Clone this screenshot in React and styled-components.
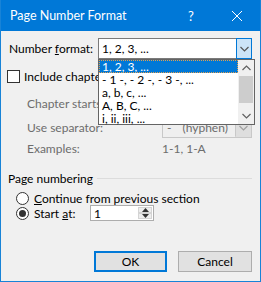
import React from "react";
import styled, { createGlobalStyle } from "styled-components";

const GlobalStyle = createGlobalStyle`
  html, body {
    margin: 0;
    padding: 0;
    background: #ffffff;
  }
  * {
    box-sizing: border-box;
  }
`;

const FONT = `Lato, "Noto Sans", sans-serif`;

const Window = styled.div`
  width: 261px;
  height: 282px;
  display: flex;
  flex-direction: column;
  background: #f0f0f0;
  border: 1px solid #1883d7;
  border-top: none;
  font-family: ${FONT};
  font-size: 12px;
  color: #000;
  overflow: hidden;
`;

const TitleBar = styled.div`
  height: 31px;
  flex-shrink: 0;
  display: flex;
  align-items: center;
  background: #0078d7;
  color: #fff;
  padding-left: 9px;
`;

const Title = styled.div`
  flex: 1;
  font-size: 12.5px;
`;

const TitleButton = styled.div`
  width: 46px;
  height: 31px;
  display: flex;
  align-items: center;
  justify-content: center;
  font-size: 13px;
`;

const Body = styled.div`
  flex: 1;
  display: flex;
  flex-direction: column;
  padding: 7px 8px 9px 7px;
`;

const FieldRow = styled.div`
  position: relative;
  display: grid;
  grid-template-columns: ${(p) => p.$label}px 1fr;
  align-items: center;
  height: 21px;
  margin-top: ${(p) => p.$top || 0}px;
  padding-left: ${(p) => p.$indent || 1}px;
  color: ${(p) => (p.$disabled ? "#6d6d6d" : "#000")};
`;

const Label = styled.span`
  white-space: nowrap;
`;

const Combo = styled.div`
  position: relative;
  height: 21px;
  display: flex;
  align-items: stretch;
  background: ${(p) => (p.$disabled ? "#efefef" : "#fff")};
  border: 1px solid ${(p) => (p.$disabled ? "#c8c8c8" : "#7a7a7a")};
`;

const ComboText = styled.div`
  flex: 1;
  display: flex;
  align-items: center;
  gap: 11px;
  padding-left: ${(p) => (p.$disabled ? 4 : 3)}px;
  white-space: nowrap;
  color: ${(p) => (p.$disabled ? "#6d6d6d" : "#000")};
`;

const ComboButton = styled.div`
  width: 16px;
  display: flex;
  align-items: center;
  justify-content: center;
  margin: ${(p) => (p.$open ? "-1px -1px -1px 0" : "0")};
  background: ${(p) => (p.$open ? "#cce4f7" : p.$disabled ? "#dedede" : "#fff")};
  border: 1px solid ${(p) => (p.$open ? "#0078d7" : "transparent")};
  border-left: ${(p) => (p.$disabled ? "1px solid #c8c8c8" : undefined)};
`;

const DropList = styled.div`
  position: absolute;
  top: 20px;
  left: -1px;
  width: 157px;
  height: 66px;
  display: flex;
  background: #fff;
  border: 1px solid #646464;
  z-index: 5;
`;

const Items = styled.div`
  flex: 1;
  display: flex;
  flex-direction: column;
`;

const Item = styled.div`
  height: 13px;
  line-height: 11px;
  padding-left: 2px;
  white-space: nowrap;
  color: ${(p) => (p.$selected ? "#fff" : "#000")};
  background: ${(p) => (p.$selected ? "#0078d7" : "transparent")};
  border: 1px dotted ${(p) => (p.$selected ? "#e0a050" : "transparent")};
`;

const ScrollBar = styled.div`
  width: 16px;
  display: flex;
  flex-direction: column;
  background: #f0f0f0;
`;

const ScrollArrow = styled.div`
  height: 16px;
  display: flex;
  align-items: center;
  justify-content: center;
`;

const ScrollTrack = styled.div`
  flex: 1;
  display: flex;
  flex-direction: column;
  padding: 0 1px;
`;

const ScrollThumb = styled.div`
  height: 27px;
  background: #cdcdcd;
`;

const CheckRow = styled.label`
  display: flex;
  align-items: center;
  gap: 4px;
  height: 13px;
  margin-top: 11px;
  margin-left: -1px;
  white-space: nowrap;
`;

const CheckBox = styled.span`
  width: 13px;
  height: 13px;
  flex-shrink: 0;
  background: #fff;
  border: 1px solid #333;
`;

const TextRow = styled.div`
  display: grid;
  grid-template-columns: 135px 1fr;
  align-items: center;
  height: 15px;
  margin-top: ${(p) => p.$top || 0}px;
  padding-left: 19px;
  color: #6d6d6d;
`;

const GroupHeader = styled.div`
  display: grid;
  grid-template-columns: 89px 1fr;
  align-items: center;
  height: 15px;
  margin-top: 15px;
`;

const GroupLine = styled.div`
  height: 1px;
  background: #dcdcdc;
`;

const RadioRow = styled.div`
  display: flex;
  align-items: center;
  gap: 5px;
  height: ${(p) => p.$height}px;
  margin-top: ${(p) => p.$top || 0}px;
  padding-left: 8px;
  white-space: nowrap;
`;

const RadioLabel = styled.span`
  width: ${(p) => (p.$width ? `${p.$width}px` : "auto")};
`;

const Radio = styled.span`
  width: 13px;
  height: 13px;
  flex-shrink: 0;
  border-radius: 50%;
  background: #fff;
  border: 1px solid #333;
  display: flex;
  align-items: center;
  justify-content: center;

  &::after {
    content: "";
    width: 7px;
    height: 7px;
    border-radius: 50%;
    background: ${(p) => (p.$checked ? "#333" : "transparent")};
  }
`;

const SpinBox = styled.div`
  width: 64px;
  height: 16px;
  display: flex;
  background: #fff;
  border: 1px solid #adadad;
`;

const SpinText = styled.div`
  flex: 1;
  display: flex;
  align-items: center;
  padding-left: 3px;
`;

const SpinButtons = styled.div`
  width: 16px;
  display: flex;
  flex-direction: column;
  padding: 1px;
`;

const SpinHalf = styled.div`
  flex: 1;
  display: flex;
  align-items: center;
  justify-content: center;
  background: #ededed;
  border: 1px solid #d4d4d4;
`;

const Buttons = styled.div`
  margin-top: auto;
  display: flex;
  justify-content: flex-end;
  gap: 11px;
`;

const Button = styled.button`
  width: ${(p) => p.$width}px;
  height: 21px;
  padding: 0;
  font-family: ${FONT};
  font-size: 12px;
  color: #000;
  background: #e1e1e1;
  border: ${(p) => (p.$default ? "2px solid #0078d7" : "1px solid #adadad")};
`;

const Chevron = ({ dir = "down", color = "#333" }) => (
  <svg width="9" height="6" viewBox="0 0 9 6">
    <path
      d={dir === "down" ? "M0.5 1 L4.5 5 L8.5 1" : "M0.5 5 L4.5 1 L8.5 5"}
      fill="none"
      stroke={color}
      strokeWidth="1.2"
    />
  </svg>
);

const Triangle = ({ dir }) => (
  <svg width="7" height="4" viewBox="0 0 7 4">
    <path d={dir === "up" ? "M0 4 L3.5 0 L7 4 Z" : "M0 0 L3.5 4 L7 0 Z"} fill="#333" />
  </svg>
);

const CloseIcon = () => (
  <svg width="10" height="10" viewBox="0 0 10 10">
    <path d="M0 0 L10 10 M10 0 L0 10" stroke="#fff" strokeWidth="1" />
  </svg>
);

const formats = [
  "1, 2, 3, ...",
  "- 1 -, - 2 -, - 3 -, ...",
  "a, b, c, ...",
  "A, B, C, ...",
  "i, ii, iii, ...",
];

export default function App() {
  return (
    <>
      <GlobalStyle />
      <Window>
        <TitleBar>
          <Title>Page Number Format</Title>
          <TitleButton>?</TitleButton>
          <TitleButton>
            <CloseIcon />
          </TitleButton>
        </TitleBar>
        <Body>
          <FieldRow $label={89} $top={0}>
            <Label>
              Number <u>f</u>ormat:
            </Label>
            <Combo>
              <ComboText>1, 2, 3, ...</ComboText>
              <ComboButton $open>
                <Chevron color="#555" />
              </ComboButton>
              <DropList>
                <Items>
                  {formats.map((f, i) => (
                    <Item key={f} $selected={i === 0}>
                      {f}
                    </Item>
                  ))}
                </Items>
                <ScrollBar>
                  <ScrollArrow>
                    <Chevron dir="up" color="#606060" />
                  </ScrollArrow>
                  <ScrollTrack>
                    <ScrollThumb />
                  </ScrollTrack>
                  <ScrollArrow>
                    <Chevron color="#606060" />
                  </ScrollArrow>
                </ScrollBar>
              </DropList>
            </Combo>
          </FieldRow>

          <CheckRow>
            <CheckBox />
            <span>Include chapter number</span>
          </CheckRow>

          <FieldRow $label={135} $indent={19} $top={10} $disabled>
            <Label>Chapter starts with style:</Label>
            <Combo $disabled>
              <ComboText $disabled>Heading 1</ComboText>
              <ComboButton $disabled>
                <Chevron color="#a0a0a0" />
              </ComboButton>
            </Combo>
          </FieldRow>

          <FieldRow $label={135} $indent={19} $top={3} $disabled>
            <Label>Use separator:</Label>
            <Combo $disabled>
              <ComboText $disabled>
                <span>-</span>
                <span>(hyphen)</span>
              </ComboText>
              <ComboButton $disabled>
                <Chevron color="#a0a0a0" />
              </ComboButton>
            </Combo>
          </FieldRow>

          <TextRow $top={3}>
            <span>Examples:</span>
            <span>1-1, 1-A</span>
          </TextRow>

          <GroupHeader>
            <span>Page numbering</span>
            <GroupLine />
          </GroupHeader>

          <RadioRow $height={13} $top={6}>
            <Radio />
            <RadioLabel>
              <u>C</u>ontinue from previous section
            </RadioLabel>
          </RadioRow>

          <RadioRow $height={16}>
            <Radio $checked />
            <RadioLabel $width={51}>
              Start <u>a</u>t:
            </RadioLabel>
            <SpinBox>
              <SpinText>1</SpinText>
              <SpinButtons>
                <SpinHalf>
                  <Triangle dir="up" />
                </SpinHalf>
                <SpinHalf>
                  <Triangle dir="down" />
                </SpinHalf>
              </SpinButtons>
            </SpinBox>
          </RadioRow>

          <Buttons>
            <Button $default $width={73}>
              OK
            </Button>
            <Button $width={74}>Cancel</Button>
          </Buttons>
        </Body>
      </Window>
    </>
  );
}
